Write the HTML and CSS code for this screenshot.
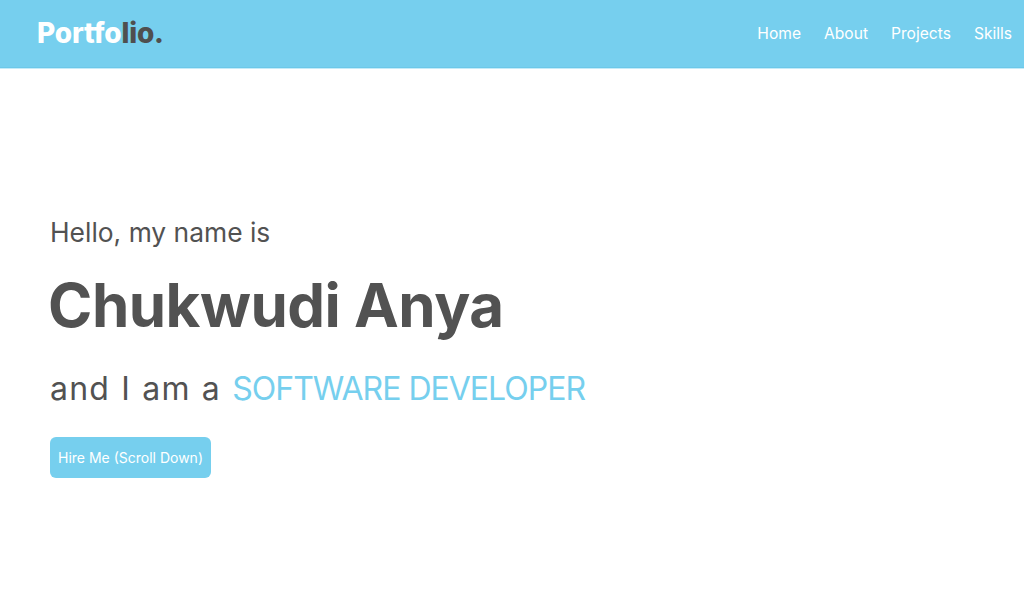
FILE: index.html
```html
<!DOCTYPE html>
<html lang="en">
<head>
<meta charset="utf-8">
<title>Portfolio</title>
<link rel="stylesheet" href="styles.css">
</head>
<body>
<header class="navbar">
  <a class="logo" href="#">Portfo<span class="logo-dark">lio.</span></a>
  <nav class="nav-links">
    <a href="#">Home</a>
    <a href="#">About</a>
    <a href="#">Projects</a>
    <a href="#">Skills</a>
  </nav>
</header>
<main class="hero">
  <p class="hello">Hello, my name is</p>
  <h1 class="name">Chukwudi Anya</h1>
  <p class="role">and I am a <span class="accent">SOFTWARE DEVELOPER</span></p>
  <a class="btn" href="#">Hire Me (Scroll Down)</a>
</main>
</body>
</html>
```
FILE: styles.css
```css
* { box-sizing: border-box; }
html, body { margin: 0; padding: 0; }
body {
  font-family: Inter, "Open Sans", sans-serif;
  background: #ffffff;
  color: #525252;
}
a { text-decoration: none; }
.navbar {
  height: 68px;
  background: #76cfee;
  border-bottom: 1px solid #6cc8e9;
  box-shadow: 0 1px 0 #c4ebf8;
  display: flex;
  align-items: center;
  justify-content: space-between;
  padding: 0 12px 0 37px;
}
.logo {
  font-size: 28px;
  font-weight: 800;
  color: #ffffff;
  letter-spacing: -0.2px;
  margin-top: -2px;
}
.logo-dark { color: #4f4f4f; }
.nav-links {
  display: flex;
  gap: 23px;
  margin-top: -1px;
}
.nav-links a {
  color: #ffffff;
  font-size: 15.6px;
}
.hero {
  display: flex;
  flex-direction: column;
  align-items: flex-start;
  padding: 144px 0 0 50px;
}
.hello {
  margin: 0;
  font-size: 26.4px;
  line-height: 40px;
  font-weight: 400;
}
.name {
  margin: 13px 0 0 -2px;
  font-size: 60px;
  line-height: 80px;
  font-weight: 700;
  letter-spacing: -0.5px;
}
.role {
  margin: 19px 0 0;
  font-size: 32px;
  line-height: 50px;
  font-weight: 400;
  letter-spacing: 1.2px;
  word-spacing: 1px;
}
.accent {
  color: #76cfee;
  letter-spacing: -1px;
  word-spacing: 0;
}
.btn {
  display: block;
  margin-top: 23px;
  background: #76cfee;
  color: #ffffff;
  font-size: 14px;
  line-height: 41px;
  padding: 0 8px;
  border-radius: 6px;
}
```
